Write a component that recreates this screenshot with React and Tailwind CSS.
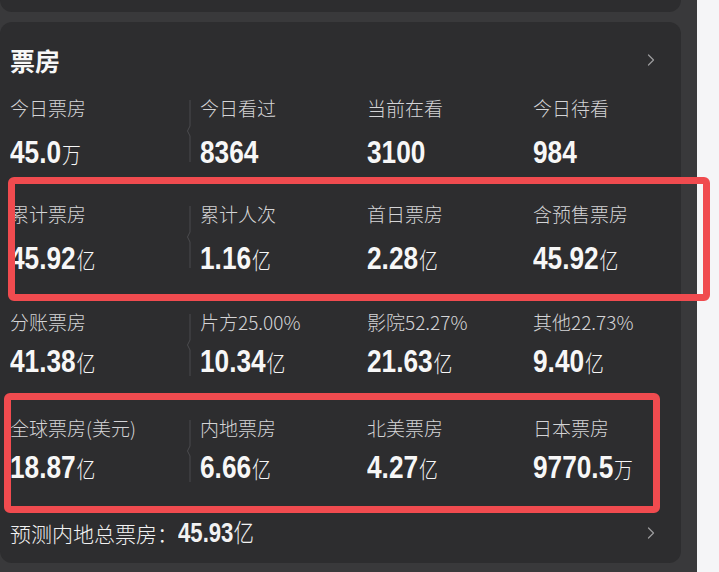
import { ChevronRight } from 'lucide-react'

const cjk = { fontFamily: '"Noto Sans CJK SC", "Noto Sans", sans-serif' }
const num = { fontFamily: '"Liberation Sans", Arial, sans-serif' }

const rows = [
  {
    mt: 'mt-[16px]',
    gap: 'mt-[10px]',
    items: [
      ['今日票房', '45.0', '万'],
      ['今日看过', '8364', ''],
      ['当前在看', '3100', ''],
      ['今日待看', '984', ''],
    ],
  },
  {
    mt: 'mt-[28px]',
    gap: 'mt-[10px]',
    items: [
      ['累计票房', '45.92', '亿'],
      ['累计人次', '1.16', '亿'],
      ['首日票房', '2.28', '亿'],
      ['含预售票房', '45.92', '亿'],
    ],
  },
  {
    mt: 'mt-[30px]',
    gap: 'mt-[5px]',
    items: [
      ['分账票房', '41.38', '亿'],
      ['片方25.00%', '10.34', '亿'],
      ['影院52.27%', '21.63', '亿'],
      ['其他22.73%', '9.40', '亿'],
    ],
  },
  {
    mt: 'mt-[33px]',
    gap: 'mt-[5px]',
    items: [
      ['全球票房(美元)', '18.87', '亿'],
      ['内地票房', '6.66', '亿'],
      ['北美票房', '4.27', '亿'],
      ['日本票房', '9770.5', '万'],
    ],
  },
]

function Divider() {
  return (
    <svg className="absolute right-[8px] top-[6px]" width="6" height="62" viewBox="0 0 6 62">
      <path d="M4 0 L4 26 L1.5 31 L4 36 L4 62" stroke="#4b4b4e" strokeWidth="1" fill="none" />
    </svg>
  )
}

function Cell({ label, value, unit, gap, first }) {
  return (
    <div className={first ? 'relative' : ''}>
      {first && <Divider />}
      <div className="h-[28px] leading-[28px] text-[19px] font-light text-[#d4d4d6] whitespace-nowrap" style={cjk}>
        {label}
      </div>
      <div className={`${gap} h-[40px] leading-[40px] whitespace-nowrap text-[#f7f7f7]`}>
        <span className="inline-block scale-x-[0.82] origin-left">
          <span className="text-[32px] font-bold" style={num}>{value}</span>
          {unit && (
            <span className="text-[23px] font-light ml-[1px]" style={cjk}>{unit}</span>
          )}
        </span>
      </div>
    </div>
  )
}

export default function App() {
  return (
    <div className="relative w-[719px] h-[572px] overflow-hidden flex bg-[#f5f5f7]">
      <div className="w-[697px] h-full bg-[#39393b]">
        <div className="w-[681px] h-[12px] bg-[#2d2d2f] rounded-b-[12px]" />
        <div className="mt-[10px] w-[681px] h-[541px] bg-[#2d2d2f] rounded-[12px] pt-[20px] pl-[10px]">
          <div className="flex items-center justify-between h-[36px]">
            <div className="text-[25px] font-semibold text-[#f7f7f7] leading-[36px]" style={cjk}>
              票房
            </div>
            <ChevronRight className="mr-[20px]" size={20} color="#9a9a9c" strokeWidth={1.5} />
          </div>

          {rows.map((row, i) => (
            <div key={i} className={`${row.mt} grid grid-cols-[190px_167px_166px_1fr]`}>
              {row.items.map(([label, value, unit], j) => (
                <Cell key={j} label={label} value={value} unit={unit} gap={row.gap} first={j === 0} />
              ))}
            </div>
          ))}

          <div className="mt-[28px] h-[36px] flex items-center justify-between">
            <div className="whitespace-nowrap text-[#f2f2f2] leading-[36px]">
              <span className="text-[21px] font-light" style={cjk}>预测内地总票房：</span>
              <span className="inline-block scale-x-[0.82] origin-left">
                <span className="text-[27px] font-bold" style={num}>45.93</span>
                <span className="text-[25px] font-light" style={cjk}>亿</span>
              </span>
            </div>
            <ChevronRight className="mr-[20px]" size={20} color="#9a9a9c" strokeWidth={1.5} />
          </div>
        </div>
      </div>

      {/* annotation boxes */}
      <div className="absolute left-[8px] top-[177px] w-[702px] h-[124px] border-[7px] border-[#f04b4f] rounded-[6px]" />
      <div className="absolute left-[4px] top-[393px] w-[656px] h-[120px] border-[7px] border-[#f04b4f] rounded-[6px]" />
    </div>
  )
}
